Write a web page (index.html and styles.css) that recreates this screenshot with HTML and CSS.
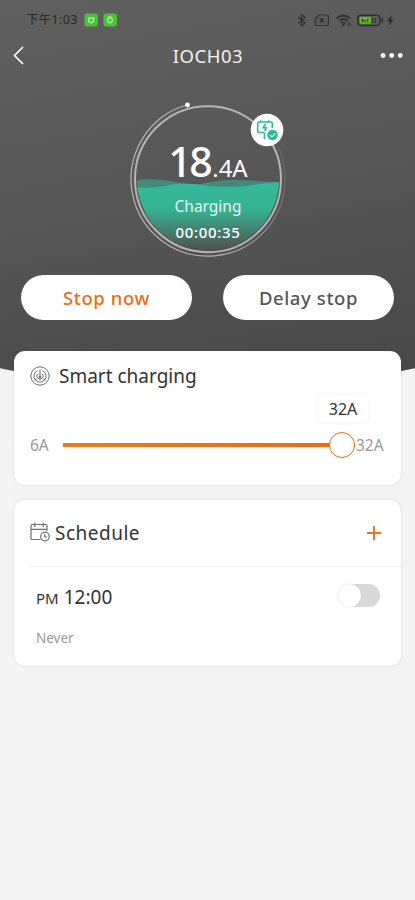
FILE: index.html
```html
<!DOCTYPE html>
<html lang="en">
<head>
<meta charset="utf-8">
<title>IOCH03</title>
<link rel="stylesheet" href="styles.css">
</head>
<body>
<div class="app">
  <section class="hero">
    <div class="status">
      <span class="clock">下午1:03</span>
      <svg class="apps" width="34" height="14" viewBox="0 0 34 14" fill="none" stroke="#a5ef9a" stroke-width="1.4">
        <rect x="0.5" y="0.5" width="13.5" height="13" rx="3" fill="#4cc13b" stroke="none"/>
        <rect x="19.5" y="0.5" width="13.5" height="13" rx="3" fill="#4cc13b" stroke="none"/>
        <circle cx="7" cy="7.3" r="2.4"/><path d="M4.500 4.500l1 1M9.700 4.200v4.500"/>
        <circle cx="26" cy="7.3" r="2.4"/><path d="M24 3.500l4 1.200"/>
      </svg>
      <svg class="signals" width="100" height="16" viewBox="0 0 100 16" fill="none" stroke="#303030" stroke-width="1.2">
        <path d="M2 5l7 6-3.500 3V2.500L9 5.500 2 11.500"/>
        <g transform="translate(2.300 0)">
          <path d="M21 3h7.500q1.500 0 1.500 1.500v8q0 1-1 1H18q-1 0-1-1V7zM21.500 6.500l4 4M25.500 6.500l-4 4"/>
          <path d="M38 6.500q7-6 14 0M40.500 9q4.500-4 9 0M43 11.300q2-2 4 0" stroke-width="1.700"/><circle cx="45" cy="13" r="1.300" fill="#303030" stroke="none"/><path d="M50 10v4M52 11v3"/>
          <rect x="59.500" y="3.200" width="22" height="10.300" rx="3" stroke-width="1.500"/>
          <path d="M83.300 6q2 2.300 0 4.700" stroke-width="1.500"/>
          <rect x="61.500" y="5" width="11" height="6.800" rx="1" fill="#55c819" stroke="none"/>
          <path d="M64 6.500v4M64 8.500h3v2M69.500 6.500v4M74.500 6v5M77 6v5" stroke-width="1"/>
          <path d="M94 3l-5.300 6.300h3l-1.700 5L95.500 7.600h-3z" fill="#272727" stroke="none"/>
        </g>
      </svg>
    </div>
    <header class="nav">
      <svg width="14" height="20" viewBox="0 0 14 20" fill="none" stroke="#fff" stroke-width="1.700"><path d="M11 1L2.500 9.500l8.500 8.500"/></svg>
      <h1>IOCH03</h1>
      <svg width="24" height="8" viewBox="0 0 24 8" fill="#fff"><circle cx="3" cy="3.500" r="2.400"/><circle cx="11.700" cy="3.500" r="2.400"/><circle cx="20.300" cy="3.500" r="2.400"/></svg>
    </header>
    <div class="gauge">
      <svg class="dial" width="160" height="160" viewBox="128 99 160 160" fill="none">
        <defs>
          <linearGradient id="water" x1="0" y1="180" x2="0" y2="252" gradientUnits="userSpaceOnUse">
            <stop offset="0" stop-color="#35b999"/><stop offset=".4" stop-color="#36b395"/><stop offset=".95" stop-color="#4d5552"/>
          </linearGradient>
          <linearGradient id="trail" x1="180" y1="190" x2="284" y2="150" gradientUnits="userSpaceOnUse">
            <stop offset="0" stop-color="#b5b5b5"/><stop offset="1" stop-color="#666"/>
          </linearGradient>
          <clipPath id="bowl"><circle cx="208" cy="179.200" r="71"/></clipPath>
        </defs>
        <g clip-path="url(#bowl)">
          <path d="M134 180.500q14-2 28-.5t34 5q20-5 38-5t50 3v10H134z" fill="#438b79"/>
          <path d="M134 187q16 2 30-1t30-2q20 3 36 3t30-3 24-1v76H134z" fill="url(#water)"/>
        </g>
        <circle cx="208" cy="179.200" r="73" stroke="#b5b5b5" stroke-width="2"/>
        <path d="M187.500 104.900A77 77 0 1 0 285 179Q285 160 278 147" stroke="url(#trail)" stroke-width="1.200"/>
        <circle cx="187.500" cy="105" r="2.400" fill="#fff"/>
      </svg>
      <div class="reading"><b>18</b><span>.4A</span></div>
      <div class="state">Charging</div>
      <div class="timer">00:00:35</div>
      <svg class="badge" width="34" height="34" viewBox="0 0 34 34" fill="none" stroke="#2abb9b" stroke-width="1.600">
        <circle cx="17" cy="17" r="16.300" fill="#fff" stroke="none"/>
        <path d="M14 19.500H9.200q-1.500 0-1.500-1.500v-7.500Q7.700 9 9.200 9h11.600q1.500 0 1.500 1.500V15M10.700 9V7.200M18.700 9V7.200M15.500 11l-2.300 3.700h3L14.600 18M14.500 19.500v6.500"/>
        <circle cx="22.500" cy="22" r="5.300" fill="#2abb9b" stroke="none"/>
        <path d="M20 22l2 1.800 3.300-3.500" stroke="#c8f1e7" stroke-width="1.200"/>
      </svg>
    </div>
    <div class="actions">
      <button class="stop">Stop now</button>
      <button class="delay">Delay stop</button>
    </div>
  </section>
  <main>
    <section class="card smart">
      <div class="title">
        <svg width="20" height="20" viewBox="0 0 20 20" fill="none" stroke="#707070"><circle cx="10" cy="10" r="9.200"/><path d="M7.300 4.800a6 6 0 1 0 5.400 0M7.500 8a3.200 3.200 0 1 0 5 0M10 3.500v7M4.500 15l2-2M15.500 15l-2-2"/><circle cx="10" cy="11" r="1" fill="#707070"/></svg>
        <h2>Smart charging</h2>
      </div>
      <div class="slider">
        <span class="min">6A</span>
        <div class="track"><div class="thumb"><span class="tip">32A</span></div></div>
        <span class="max">32A</span>
      </div>
    </section>
    <section class="card schedule">
      <div class="title">
        <svg width="20" height="20" viewBox="0 0 20 20" fill="none" stroke="#707070" stroke-width="1.200"><path d="M10.500 16.500H2.300q-1.300 0-1.300-1.300V2.800q0-1.300 1.300-1.300h13.400Q17 1.500 17 2.800V8M1 6.300h16M4.800-.5v4.500M13.200-.5v4.500"/><circle cx="15" cy="13.500" r="4.300"/><path d="M14.800 11v3h2.400"/></svg>
        <h2>Schedule</h2>
        <svg class="add" width="16" height="16" viewBox="0 0 16 16" stroke="#e87519" stroke-width="1.900"><path d="M1 8h14M8 1v14"/></svg>
      </div>
      <div class="entry">
        <div class="time"><small>PM</small><span>12:00</span></div>
        <div class="switch"><i></i></div>
      </div>
      <div class="repeat">Never</div>
    </section>
  </main>
</div>
</body>
</html>
```

FILE: styles.css
```css
* { box-sizing: border-box; }
body { margin: 0; background: #f4f4f4; font-family: "Noto Sans", "Noto Sans CJK SC", sans-serif; }
h1, h2 { margin: 0; font-weight: 400; }
svg { display: block; flex: none; overflow: visible; }
.app { width: 415px; height: 900px; overflow: hidden; }
.hero {
  height: 390px;
  background: linear-gradient(170deg, #606060 0%, #575757 45%, #474747 100%);
  clip-path: circle(1000px at 50% -610px);
}
.status { display: flex; align-items: center; height: 38px; padding: 2px 19px 0 26px; }
.clock { width: 58px; color: #292929; font-size: 12.500px; line-height: 16px; letter-spacing: .3px; white-space: nowrap; }
.signals { margin-left: auto; }
.nav { display: flex; align-items: center; justify-content: space-between; height: 36px; padding: 0 11px 0 12px; }
.nav h1 { color: #f2f2f2; font-size: 18.500px; line-height: 26px; padding-left: 10px; letter-spacing: .5px; }
.gauge { position: relative; width: 160px; height: 160px; margin: 25px auto 0 128px; padding-top: 37px; color: #fff; text-align: center; }
.dial { position: absolute; inset: 0; }
.reading, .state, .timer { position: relative; white-space: nowrap; }
.reading { display: flex; align-items: baseline; justify-content: center; height: 58px; line-height: 50px; }
.reading b { font-size: 41px; font-weight: 500; letter-spacing: -2.500px; }
.reading span { padding-left: 2px; font-size: 24px; font-weight: 400; }
.state { height: 25px; font-size: 15.500px; line-height: 24px; color: #e4faf3; }
.timer { font-size: 15px; font-weight: 500; letter-spacing: .7px; line-height: 26px; }
.badge { position: absolute; left: 122px; top: 14px; }
.actions { display: flex; justify-content: space-between; padding: 16px 21px 0; }
.actions button { width: 171px; height: 45px; border: 0; border-radius: 23px; background: #fff; padding: 0; font: 500 18.500px "Noto Sans", sans-serif; letter-spacing: .6px; }
.actions .stop { color: #eb6d17; }
.actions .delay { color: #555; }
main { position: relative; display: grid; gap: 15px; margin-top: -39px; padding: 0 14px; }
.card { background: #fff; border-radius: 11px; box-shadow: 0 0 3px rgba(0,0,0,.13); }
.title { display: flex; align-items: center; padding-left: 16px; color: #333; }
.title h2 { font-size: 19px; line-height: 28px; }
.smart { height: 134px; }
.smart .title { height: 49px; gap: 9px; }
.slider { display: flex; align-items: center; height: 90px; padding-left: 16px; color: #999; font-size: 15.500px; }
.min { width: 33px; }
.track { display: flex; align-items: center; justify-content: flex-end; width: 292px; height: 4px; background: linear-gradient(90deg, #e5811d, #e86c12); }
.thumb { position: relative; flex: none; width: 26px; height: 26px; border: 1.500px solid #eb6d22; border-radius: 50%; background: #fff; }
.tip { position: absolute; left: -12px; top: -38px; width: 50px; height: 27px; border-radius: 4px; background: #fff; box-shadow: 0 0 4px rgba(0,0,0,.07); color: #333; font-size: 16px; line-height: 29px; text-align: center; }
.max { margin-left: 1px; }
.schedule { height: 166px; }
.schedule .title { height: 67px; margin-left: 16px; padding: 0 19px 0 0; gap: 5px; border-bottom: 1px solid #f3f3f3; }
.schedule h2 { letter-spacing: .5px; }
.add { margin-left: auto; }
.entry { display: flex; align-items: center; justify-content: space-between; height: 60px; padding: 0 21px 0 22px; color: #333; }
.time { display: flex; align-items: baseline; gap: 5px; font-size: 19px; }
.time small { font-size: 15px; }
.switch { width: 42px; height: 23px; margin-top: -3px; border-radius: 12px; background: #d9d9d9; }
.switch i { display: block; width: 23px; height: 23px; border-radius: 50%; background: #fff; box-shadow: 0 0 2px rgba(0,0,0,.12); }
.repeat { padding-left: 22px; color: #999; font-size: 13.500px; line-height: 22px; }
```
